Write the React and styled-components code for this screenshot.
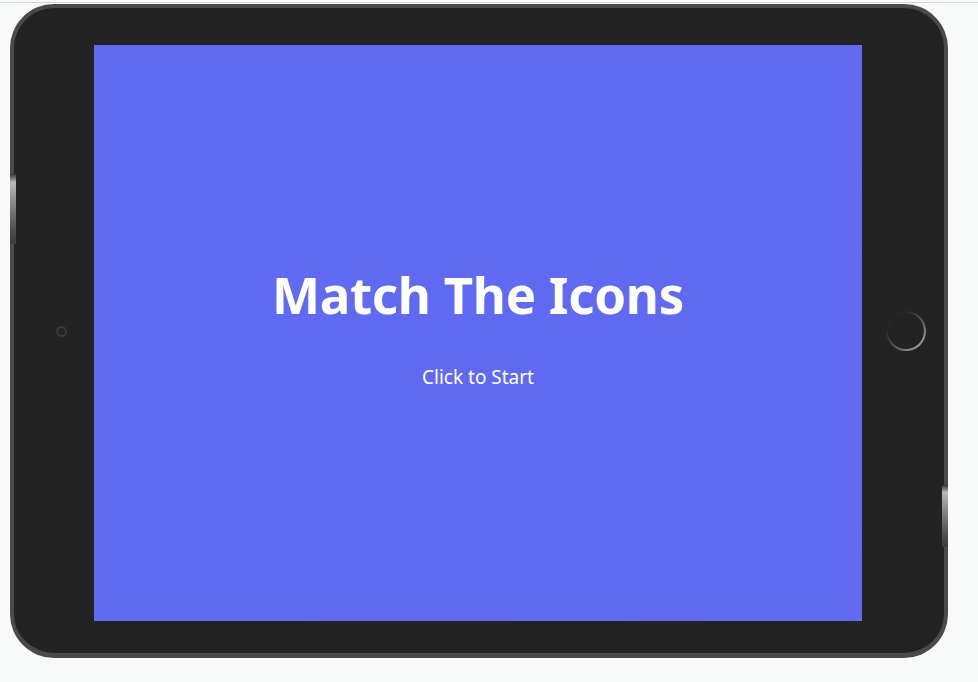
import React from "react";
import styled, { createGlobalStyle } from "styled-components";

const GlobalStyle = createGlobalStyle`
  html, body {
    margin: 0;
    padding: 0;
    background: #f8f9f9;
    font-family: "Noto Sans", "Open Sans", sans-serif;
  }
`;

const App = () => {
  return (
    <>
      <GlobalStyle />
      <Page>
        <TopRule />
        <Tablet>
          <SideButton side="left" />
          <SideButton side="right" />
          <Bezel>
            <Camera />
          </Bezel>
          <Screen>
            <Title>Match The Icons</Title>
            <StartText>Click to Start</StartText>
          </Screen>
          <Bezel>
            <HomeButton />
          </Bezel>
        </Tablet>
      </Page>
    </>
  );
};

export default App;

const Page = styled.div`
  width: 978px;
  height: 682px;
  padding-top: 2px;
  box-sizing: border-box;
  overflow: hidden;
`;

const TopRule = styled.div`
  width: 100%;
  height: 1px;
  background-color: #d4d5db;
`;

const Tablet = styled.div`
  position: relative;
  margin: 1px 0 0 10px;
  width: 938px;
  height: 654px;
  box-sizing: border-box;
  border: 4px solid #4a4a4a;
  border-bottom-width: 5px;
  border-radius: 44px;
  background-color: #232323;
  padding: 37px 0 32px 0;
  display: grid;
  grid-template-columns: 80px 768px 82px;
  align-items: center;
`;

const SideButton = styled.div`
  position: absolute;
  width: 6px;
  left: ${(p) => (p.side === "left" ? "-4px" : "auto")};
  right: ${(p) => (p.side === "right" ? "-4px" : "auto")};
  top: ${(p) => (p.side === "left" ? "166px" : "477px")};
  height: ${(p) => (p.side === "left" ? "70px" : "62px")};
  background: linear-gradient(
    to bottom,
    #2e3430 0%,
    #b8b8b8 12%,
    #8a8a8a 40%,
    #4e4e4e 80%,
    #3a3a3a 100%
  );
`;

const Bezel = styled.div`
  height: 100%;
  display: flex;
  align-items: center;
  justify-content: center;
  padding-bottom: 4px;
  box-sizing: border-box;
`;

const Camera = styled.div`
  margin-left: 14px;
  width: 7px;
  height: 7px;
  border-radius: 50%;
  border: 2px solid #3a3a3e;
  background-color: #262628;
`;

const HomeButton = styled.div`
  margin-left: 6px;
  width: 40px;
  height: 40px;
  border-radius: 50%;
  box-sizing: border-box;
  border: 2px solid transparent;
  background:
    linear-gradient(#232323, #232323) padding-box,
    linear-gradient(135deg, #262626 25%, #555 55%, #9a9a9a 85%) border-box;
`;

const Screen = styled.div`
  width: 768px;
  height: 576px;
  background: radial-gradient(circle at 50% 55%, #5f69f1 0%, #616cf3 100%);
  display: flex;
  flex-direction: column;
  align-items: center;
  padding-top: 218px;
  box-sizing: border-box;
  color: #ffffff;
`;

const Title = styled.h1`
  margin: 0;
  font-size: 51px;
  line-height: 62px;
  font-weight: 700;
  letter-spacing: -0.3px;
`;

const StartText = styled.div`
  margin-top: 40px;
  font-size: 19px;
  line-height: 24px;
  font-weight: 400;
  cursor: pointer;
`;
